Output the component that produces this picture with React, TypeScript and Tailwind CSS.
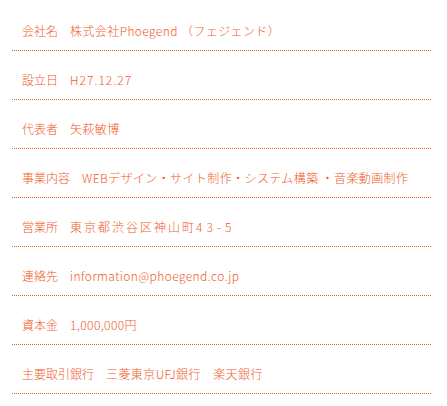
import React from "react";

const rows: { label: string; value: React.ReactNode }[] = [
  { label: "会社名", value: "株式会社Phoegend （フェジェンド）" },
  { label: "設立日", value: <span className="tracking-[1px]">H27.12.27</span> },
  { label: "代表者", value: "矢萩敏博" },
  { label: "事業内容", value: "WEBデザイン・サイト制作・システム構築 ・音楽動画制作" },
  {
    label: "営業所",
    value: (
      <span className="tracking-[2px]">
        東京都渋谷区神山町<span className="tracking-[4px]">43-5</span>
      </span>
    ),
  },
  { label: "連絡先", value: "information@phoegend.co.jp" },
  { label: "資本金", value: "1,000,000円" },
  { label: "主要取引銀行", value: "三菱東京UFJ銀行　楽天銀行" },
];

export default function App() {
  return (
    <div
      className="w-[447px] h-[406px] bg-white pt-[2px]"
      style={{ fontFamily: '"Noto Sans CJK JP", "Noto Sans", sans-serif' }}
    >
      <ul className="ml-[12px] w-[420px]">
        {rows.map((r) => (
          <li key={r.label}>
            <div className="pt-[20px] pb-[10px] pl-[10px] text-[12px] leading-[18px] text-[#f05a28] font-light whitespace-nowrap">
              <span>{r.label}</span>
              <span>　</span>
              <span className="tracking-[0.4px]">{r.value}</span>
            </div>
            <div className="h-px w-full bg-[linear-gradient(to_right,#f05a24_50%,transparent_50%)] bg-[length:2px_1px] bg-repeat-x" />
          </li>
        ))}
      </ul>
    </div>
  );
}
